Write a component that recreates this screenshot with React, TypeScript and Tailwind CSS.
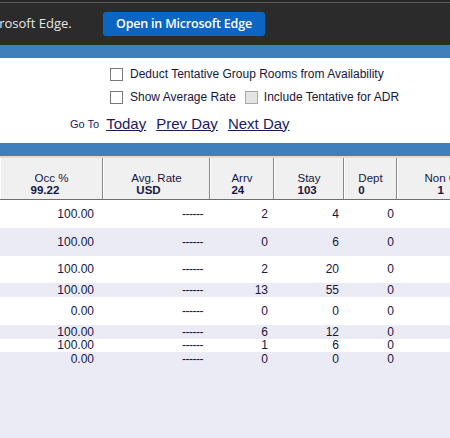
import React from "react";

const cols = [
  { w: "w-[103px]", title: "Occ %", sub: "99.22", subCls: "-ml-[4px]", pr: "pr-[9px]" },
  { w: "w-[107px]", title: "Avg. Rate", sub: "USD", subCls: "ml-[5px]", pr: "pr-[7px]" },
  { w: "w-[64px]", title: "Arrv", sub: "24", subCls: "", pr: "pr-[6px]" },
  { w: "w-[70px]", title: "Stay", sub: "103", subCls: "", pr: "pr-[5px]" },
  { w: "w-[53px]", title: "Dept", sub: "0", subCls: "", pr: "pr-[3px]" },
  { w: "w-[110px]", title: "Non Comp", sub: "1", subCls: "ml-[13px]", pr: "pr-[3px]" },
];

const rows: { h: string; bg: string; v: string[] }[] = [
  { h: "h-[28px]", bg: "bg-white", v: ["100.00", "------", "2", "4", "0", ""] },
  { h: "h-[28px]", bg: "bg-[#ebebf5]", v: ["100.00", "------", "0", "6", "0", ""] },
  { h: "h-[27px]", bg: "bg-white", v: ["100.00", "------", "2", "20", "0", ""] },
  { h: "h-[14px]", bg: "bg-[#ebebf5]", v: ["100.00", "------", "13", "55", "0", ""] },
  { h: "h-[28px]", bg: "bg-white", v: ["0.00", "------", "0", "0", "0", ""] },
  { h: "h-[14px]", bg: "bg-[#ebebf5]", v: ["100.00", "------", "6", "12", "0", ""] },
  { h: "h-[13px]", bg: "bg-white", v: ["100.00", "------", "1", "6", "0", ""] },
  { h: "h-[14px]", bg: "bg-[#ebebf5]", v: ["0.00", "------", "0", "0", "0", ""] },
];

function Check({ disabled }: { disabled?: boolean }) {
  return (
    <span
      className={
        "inline-block w-[13px] h-[13px] border shrink-0 " +
        (disabled ? "bg-[#e4e4e4] border-[#a8a8a8]" : "bg-white border-[#7a7a7a]")
      }
    />
  );
}

export default function App() {
  return (
    <div className="w-[450px] h-[438px] overflow-hidden bg-[#ebebf5] font-['Liberation_Sans',Arial,sans-serif] text-[#161640]">
      {/* Edge bar */}
      <div className="h-[45px] bg-[#2b2b2b] flex flex-col">
        <div className="h-[2px] bg-[#262626]" />
        <div className="h-[1px] bg-[#5a5a5a]" />
        <div className="flex-1 flex items-center font-['Open_Sans',sans-serif]">
          <span className="text-[13px] text-[#e6e6e6] whitespace-nowrap ml-[-22px] w-[125px] shrink-0">Microsoft Edge.</span>
          <button className="h-[24px] w-[162px] bg-[#0b66c3] rounded-[3px] text-white text-[12.5px] font-semibold flex items-center justify-center tracking-[-0.2px]">
            Open in Microsoft Edge
          </button>
        </div>
      </div>
      {/* blue bar */}
      <div className="h-[13px] bg-[#3f80bb]" />
      {/* options */}
      <div className="h-[85px] bg-white pt-[8px] text-[12px]">
        <div className="h-[16px] flex items-center pl-[110px] gap-[7px]">
          <Check />
          <span>Deduct Tentative Group Rooms from Availability</span>
        </div>
        <div className="h-[16px] mt-[7px] flex items-center pl-[110px]">
          <Check />
          <span className="ml-[7px]">Show Average Rate</span>
          <span className="ml-[9px] flex"><Check disabled /></span>
          <span className="ml-[6px]">Include Tentative for ADR</span>
        </div>
        <div className="h-[20px] mt-[10px] flex items-end pl-[70px] text-[#1b1b5c]">
          <span className="text-[11px] mb-[3px]">Go To</span>
          <span className="ml-[7px] text-[15px] underline">Today</span>
          <span className="ml-[10px] text-[15px] underline">Prev Day</span>
          <span className="ml-[10px] text-[15px] underline">Next Day</span>
        </div>
      </div>
      {/* blue bar */}
      <div className="h-[13px] bg-[#3f80bb]" />
      {/* header */}
      <div className="h-[44px] flex bg-[#f0f0f0] border-t-[2px] border-[#dcdcdc] border-b border-b-[#6e6e6e] whitespace-nowrap">
        {cols.map((c, i) => (
          <div
            key={i}
            className={`${c.w} shrink-0 border-r border-r-[#8a8a8a] border-l border-l-white flex items-end justify-center pb-[3px] text-[11.5px] leading-[12px]`}
          >
            <div className="inline-flex flex-col items-start">
              <span>{c.title}</span>
              <span className={`font-bold ${c.subCls}`}>{c.sub}</span>
            </div>
          </div>
        ))}
      </div>
      {/* rows */}
      {rows.map((r, ri) => (
        <div key={ri} className={`${r.h} ${r.bg} flex items-center text-[12px] leading-[13px] whitespace-nowrap`}>
          {cols.map((c, i) => (
            <div key={i} className={`${c.w} shrink-0 text-right ${c.pr} ${i === 1 ? "tracking-[-0.5px]" : ""}`}>
              {r.v[i]}
            </div>
          ))}
        </div>
      ))}
    </div>
  );
}
